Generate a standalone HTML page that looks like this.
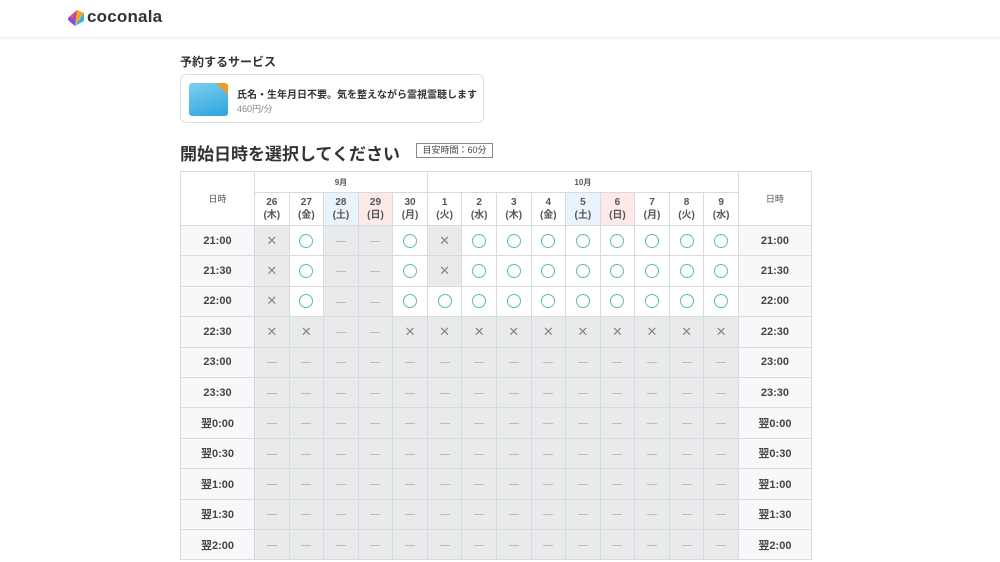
<!DOCTYPE html><html><head><meta charset="utf-8"><style>
*{margin:0;padding:0;box-sizing:border-box}
body{width:1000px;height:562px;overflow:hidden;background:#fff;font-family:"Liberation Sans","Noto Sans CJK JP",sans-serif;color:#333;position:relative}
.hdr{position:absolute;left:0;top:0;width:1000px;height:38px;border-bottom:1px solid #eee;box-shadow:0 1px 3px rgba(0,0,0,.04)}
.logo{position:absolute;left:87px;top:7px;font-size:17px;font-weight:bold;color:#333;letter-spacing:.2px}
.t1{position:absolute;left:180px;top:53px;font-size:12px;font-weight:bold}
.card{position:absolute;left:180px;top:74px;width:304px;height:49px;border:1px solid #dcdfe2;border-radius:6px}
.thumb{position:absolute;left:8px;top:8px;width:39px;height:33px;border-radius:3px;background:linear-gradient(160deg,#7fd0f0,#2aa3e0);overflow:hidden}
.thumb:after{content:"";position:absolute;right:0;top:0;border-top:12px solid #f19a2a;border-left:12px solid transparent}
.ct{position:absolute;left:56px;top:11px;font-size:10px;font-weight:bold;color:#333}
.cp{position:absolute;left:56px;top:27px;font-size:9px;color:#888}
.h2{position:absolute;left:180px;top:140px;font-size:17px;font-weight:bold;color:#333}
.badge{position:absolute;left:416px;top:143px;height:15px;width:77px;border:1px solid #888;font-size:9px;text-align:center;line-height:13px;color:#444}
table{position:absolute;left:180px;top:171px;border-collapse:collapse;table-layout:fixed;width:631px}
td{border:1px solid #d8dbdd;text-align:center;vertical-align:middle;font-size:9px;color:#555}
td.m{height:21px;font-weight:bold;font-size:8px}
td.d{height:33px;font-size:10px;line-height:13px;font-weight:bold;color:#555}
td.tm{background:#f7f8f9;font-weight:bold;font-size:11px;color:#444;height:30.4px}
td.g{background:#e8eaeb;color:#aaa}
td.w{background:#fff}
.o{display:inline-block;width:14px;height:14px;border:1.3px solid #5bbfa4;border-radius:50%;vertical-align:middle}
.x{color:#888;font-size:13px}
.dash{display:inline-block;width:10px;height:1px;background:#bbb;vertical-align:middle}
.sat{background:#e8f3fc}.sun{background:#fde9ea}
</style></head><body>
<div class="hdr"><svg style="position:absolute;left:67px;top:9px" width="18" height="18" viewBox="0 0 18 18"><path d="M10 1 L2 8 Q0 10 2 12 L8 17 Z" fill="#7b4ee6"/><path d="M10 1 L17 4 L8 17 Z" fill="#f5a623"/><path d="M17 4 L17 12 L8 17 Z" fill="#2bb6e8"/><path d="M2 8 L10 1 L6 10 Z" fill="#ee4b7a"/></svg><div class="logo">coconala</div></div>
<div class="t1">予約するサービス</div>
<div class="card"><div class="thumb"></div><div class="ct">氏名・生年月日不要。気を整えながら霊視霊聴します</div><div class="cp">460円/分</div></div>
<div class="h2">開始日時を選択してください</div>
<div class="badge">目安時間：60分</div>
<table>
<colgroup><col style="width:74px"><col span="14" style="width:34.57px"><col style="width:73px"></colgroup>
<tr><td rowspan="2" style="background:#fff">日時</td><td class="m" colspan="5">9月</td><td class="m" colspan="9">10月</td><td rowspan="2">日時</td></tr>
<tr><td class="d">26<br>(木)</td><td class="d">27<br>(金)</td><td class="d sat">28<br>(土)</td><td class="d sun">29<br>(日)</td><td class="d">30<br>(月)</td><td class="d">1<br>(火)</td><td class="d">2<br>(水)</td><td class="d">3<br>(木)</td><td class="d">4<br>(金)</td><td class="d sat">5<br>(土)</td><td class="d sun">6<br>(日)</td><td class="d">7<br>(月)</td><td class="d">8<br>(火)</td><td class="d">9<br>(水)</td></tr>
<tbody id="b"></tbody>
</table>
<script>
var times=["21:00","21:30","22:00","22:30","23:00","23:30","翌0:00","翌0:30","翌1:00","翌1:30","翌2:00"];
var rows=["XO--OXOOOOOOOO","XO--OXOOOOOOOO","XO--OOOOOOOOOO","XX--XXXXXXXXXX"];
var h="";
times.forEach(function(t,i){var p=rows[i]||"--------------";h+='<tr><td class="tm">'+t+'</td>';
for(var j=0;j<14;j++){var c=p[j];if(c=="O")h+='<td class="w"><span class="o"></span></td>';else if(c=="X")h+='<td class="g"><span class="x">✕</span></td>';else h+='<td class="g"><span class="dash"></span></td>';}
h+='<td class="tm">'+t+'</td></tr>';});
document.getElementById("b").innerHTML=h;
</script>
</body></html>
